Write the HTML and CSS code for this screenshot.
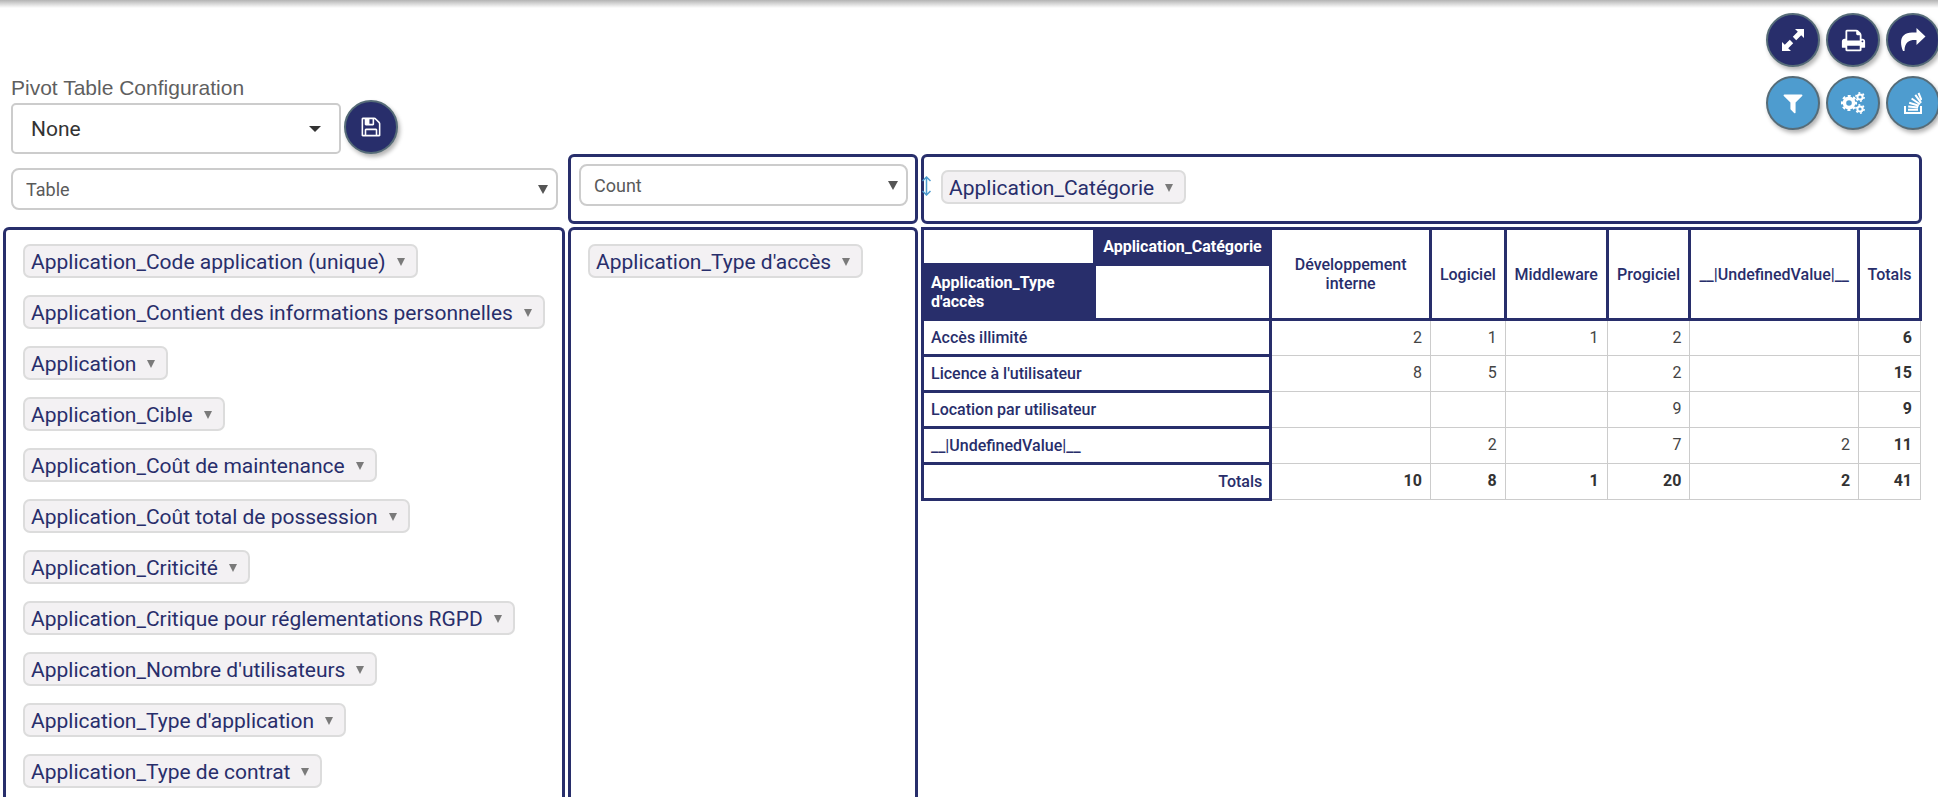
FILE: index.html
```html
<!DOCTYPE html>
<html lang="fr">
<head>
<meta charset="utf-8">
<title>Pivot Table</title>
<link rel="stylesheet" href="styles.css">
</head>
<body>
<header class="top">
  <div class="config">
    <label class="config-label" for="config">Pivot Table Configuration</label>
    <div class="config-row">
      <div class="select select-config"><select id="config"><option>None</option></select></div>
      <button class="round" type="button" aria-label="Save"><svg width="22" height="22" viewBox="0 0 1792 1792"><path d="M512 1536h768v-384h-768v384zm896 0h128v-896q0-14-10-38.500t-20-34.500l-281-281q-10-10-34-20t-39-10v416q0 40-28 68t-68 28h-576q-40 0-68-28t-28-68v-416h-128v1280h128v-416q0-40 28-68t68-28h832q40 0 68 28t28 68v416zm-384-928v-320q0-13-9.500-22.500t-22.500-9.500h-192q-13 0-22.500 9.500t-9.500 22.500v320q0 13 9.500 22.500t22.500 9.500h192q13 0 22.500-9.500t9.500-22.500zm640 32v928q0 40-28 68t-68 28h-1344q-40 0-68-28t-28-68v-1344q0-40 28-68t68-28h928q40 0 88 20t76 48l280 280q28 28 48 76t20 88z"/></svg></button>
    </div>
  </div>
  <div class="toolbar">
    <button class="round" type="button" aria-label="Full screen"><svg width="22" height="22" viewBox="0 0 22 22"><path d="M13 0h9v9l-2.800-2.800-5 5-3.400-3.400 5-5zM9 22H0v-9l2.800 2.800 5-5 3.400 3.400-5 5z"/></svg></button>
    <button class="round" type="button" aria-label="Print"><svg width="25" height="25" viewBox="0 0 1792 1792"><path d="M448 1536h896v-256h-896v256zm0-640h896v-384h-160q-40 0-68-28t-28-68v-160h-640v640zm1152 64q0-26-19-45t-45-19-45 19-19 45 19 45 45 19 45-19 19-45zm128 0v416q0 13-9.500 22.500t-22.500 9.500h-224v160q0 40-28 68t-68 28h-960q-40 0-68-28t-28-68v-160h-224q-13 0-22.500-9.500t-9.500-22.500v-416q0-79 56.500-135.500t135.500-56.500h64v-544q0-40 28-68t68-28h672q40 0 88 20t76 48l152 152q28 28 48 76t20 88v256h64q79 0 135.500 56.500t56.500 135.500z"/></svg></button>
    <button class="round" type="button" aria-label="Share"><svg width="26" height="24" viewBox="0 0 26 24"><path d="M16.500 0l9 8.500-9 8.500v-5C10 11.500 4.500 13.500 4.500 23H3C-1.500 12 2 4.500 12 4.500h4.500z"/></svg></button>
    <button class="round round-light" type="button" aria-label="Filter"><svg width="24" height="24" viewBox="0 0 1792 1792"><path d="M1595 295q17 41-14 70l-493 493v742q0 42-39 59-13 5-25 5-27 0-45-19l-256-256q-19-19-19-45v-486l-493-493q-31-29-14-70 17-39 59-39h1280q42 0 59 39z"/></svg></button>
    <button class="round round-light" type="button" aria-label="Settings"><svg width="24" height="22" viewBox="0 0 24 22"><g fill="none" stroke="#fff"><circle cx="8" cy="11" r="4.600" stroke-width="3.600"/><circle cx="8" cy="11" r="7" stroke-width="2.200" stroke-dasharray="2.900 2.598" stroke-dashoffset="1.450"/><circle cx="19" cy="5" r="2.600" stroke-width="2"/><circle cx="19" cy="5" r="4.100" stroke-width="1.600" stroke-dasharray="1.900 2.394"/><circle cx="19" cy="17" r="2.600" stroke-width="2"/><circle cx="19" cy="17" r="4.100" stroke-width="1.600" stroke-dasharray="1.900 2.394"/></g></svg></button>
    <button class="round round-light" type="button" aria-label="Stack"><svg width="18" height="22" viewBox="0 0 18 22"><g fill="none" stroke="#fff" stroke-width="2"><path d="M1 14v7h16v-7M4 17.800h10M4.200 14.600l9.900.8M5.200 10.800l9.600 3M7.600 6.500l8.300 5.800M11.300 2.900l5.800 8M14.500 1l3 7"/></g></svg></button>
  </div>
</header>

<main class="pivot">
  <div class="renderer">
    <div class="select"><select aria-label="Renderer"><option>Table</option></select></div>
  </div>
  <div class="panel aggregator">
    <div class="select"><select aria-label="Aggregator"><option>Count</option></select></div>
  </div>
  <div class="panel columns">
    <svg class="sort" width="9" height="20" viewBox="0 0 9 20"><path d="M4.500 1v18M.5 5l4-4 4 4M.5 15l4 4 4-4"/></svg>
    <button class="tag" type="button">Application_Catégorie</button>
  </div>

  <div class="panel fields open">
    <button class="tag" type="button">Application_Code application (unique)</button>
    <button class="tag" type="button">Application_Contient des informations personnelles</button>
    <button class="tag" type="button">Application</button>
    <button class="tag" type="button">Application_Cible</button>
    <button class="tag" type="button">Application_Coût de maintenance</button>
    <button class="tag" type="button">Application_Coût total de possession</button>
    <button class="tag" type="button">Application_Criticité</button>
    <button class="tag" type="button">Application_Critique pour réglementations RGPD</button>
    <button class="tag" type="button">Application_Nombre d'utilisateurs</button>
    <button class="tag" type="button">Application_Type d'application</button>
    <button class="tag" type="button">Application_Type de contrat</button>
  </div>
  <div class="panel fields open">
    <button class="tag" type="button">Application_Type d'accès</button>
  </div>
  <div class="output">
    <table class="data">
      <colgroup><col class="w-row"><col class="w-axis"><col class="w-dev"><col class="w-log"><col class="w-mid"><col class="w-pro"><col class="w-und"><col class="w-tot"></colgroup>
      <thead>
        <tr>
          <th></th><th class="axis">Application_Catégorie</th>
          <th rowspan="2">Développement interne</th><th rowspan="2">Logiciel</th><th rowspan="2">Middleware</th><th rowspan="2">Progiciel</th><th rowspan="2">__|UndefinedValue|__</th><th rowspan="2">Totals</th>
        </tr>
        <tr><th class="axis axis-row">Application_Type d'accès</th><th></th></tr>
      </thead>
      <tbody>
        <tr><th colspan="2">Accès illimité</th><td>2</td><td>1</td><td>1</td><td>2</td><td></td><td class="total">6</td></tr>
        <tr><th colspan="2">Licence à l'utilisateur</th><td>8</td><td>5</td><td></td><td>2</td><td></td><td class="total">15</td></tr>
        <tr><th colspan="2">Location par utilisateur</th><td></td><td></td><td></td><td>9</td><td></td><td class="total">9</td></tr>
        <tr><th colspan="2">__|UndefinedValue|__</th><td></td><td>2</td><td></td><td>7</td><td>2</td><td class="total">11</td></tr>
        <tr><th class="totals" colspan="2">Totals</th><td class="total">10</td><td class="total">8</td><td class="total">1</td><td class="total">20</td><td class="total">2</td><td class="total">41</td></tr>
      </tbody>
    </table>
  </div>
</main>
</body>
</html>
```

FILE: styles.css
```css
* { box-sizing: border-box; }

body {
  margin: 0;
  min-height: 100vh;
  display: flex;
  flex-direction: column;
  overflow-x: hidden;
  background: linear-gradient(#b4b4b4, #fff 8px) #fff;
  font-family: Roboto, "Liberation Sans", sans-serif;
  color: #333;
}

button, select { font-family: inherit; }

.top {
  display: flex;
  justify-content: space-between;
  align-items: flex-end;
  padding: 13px 0 0 11px;
}

.config-label {
  display: block;
  font: 21px/24px "Liberation Sans", Arial, sans-serif;
  color: #5f5f5f;
}

.config-row {
  display: flex;
  align-items: flex-end;
  gap: 3px;
}

.toolbar {
  display: grid;
  grid-template-columns: repeat(3, 54px);
  gap: 9px 6px;
  margin: 0 -2px 24px 0;
}

.round {
  width: 54px;
  height: 54px;
  padding: 0;
  display: flex;
  align-items: center;
  justify-content: center;
  border: 2px solid #566c78;
  border-radius: 50%;
  background: #282e6b;
  box-shadow: 2px 3px 4px rgba(0, 0, 0, .3);
}

.round-light { background: #4e9ccf; }
.round svg { fill: #fff; }

.select { position: relative; }

.select select {
  appearance: none;
  display: block;
  width: 100%;
  height: 42px;
  padding: 0 32px 0 13px;
  border: 2px solid #ccc;
  border-radius: 8px;
  background: #fff;
  color: #5a5a5a;
  font-size: 18px;
}

.select::after {
  content: "";
  position: absolute;
  right: 10px;
  top: 17px;
  border: solid transparent;
  border-width: 9px 5px 0;
  border-top-color: #555;
  pointer-events: none;
}

.select-config { width: 330px; }

.select-config select {
  height: 51px;
  padding-left: 18px;
  border-radius: 5px;
  color: #333;
  font-size: 21px;
}

.select-config::after {
  right: 20px;
  top: 23px;
  border-width: 6px 6px 0;
  border-top-color: #333;
}

.pivot {
  flex: 1;
  display: grid;
  grid-template-columns: minmax(0, 562fr) minmax(0, 350fr) minmax(0, 1001fr);
  grid-template-rows: 70px 1fr;
  gap: 3px;
  padding: 0 16px 0 3px;
}

.renderer { padding: 14px 7px 0 8px; }

.panel {
  border: 3px solid #282e6b;
  border-radius: 6px;
}

.aggregator { padding: 7px 7px 0 8px; }

.columns {
  position: relative;
  padding: 13px 17px;
}

.sort {
  position: absolute;
  left: -2px;
  top: 19px;
  fill: none;
  stroke: #4e9ccf;
  stroke-width: 1.5;
}

.fields {
  display: flex;
  flex-direction: column;
  align-items: flex-start;
  gap: 17px;
  padding: 14px 17px 8px;
}

.open {
  border-bottom: 0;
  border-radius: 6px 6px 0 0;
}

.tag {
  display: flex;
  align-items: center;
  gap: 11px;
  height: 34px;
  padding: 1px 11px 0 6px;
  border: 2px solid #dcdcdc;
  border-radius: 7px;
  background: #f3f1f3;
  color: #282e6b;
  font-size: 21px;
  line-height: 30px;
  white-space: nowrap;
}

.tag::after {
  content: "";
  border: solid transparent;
  border-width: 8px 4px 0;
  border-top-color: #7a7a7a;
}

.data {
  width: 100%;
  table-layout: fixed;
  border-collapse: collapse;
  font-size: 16px;
  line-height: 19px;
}

.w-row { width: 17.2%; }
.w-axis { width: 17.7%; }
.w-dev { width: 16%; }
.w-log { width: 7.5%; }
.w-mid { width: 10.2%; }
.w-pro { width: 8.3%; }
.w-und { width: 16.9%; }
.w-tot { width: 6.2%; }

.data th {
  height: 36px;
  padding: 7px;
  border: 3px solid #282e6b;
  color: #282e6b;
  font-weight: 500;
  text-align: left;
}

.data thead th { text-align: center; }

.data thead .axis {
  background: #282e6b;
  color: #fff;
  font-weight: 700;
}

.data thead .axis-row {
  height: 55px;
  text-align: left;
}

.data .totals { text-align: right; }

.data td {
  padding: 7px 8px;
  border: 1px solid #ccc;
  color: #444;
  text-align: right;
  vertical-align: top;
}

.data .total {
  color: #333;
  font-weight: 700;
}
```
